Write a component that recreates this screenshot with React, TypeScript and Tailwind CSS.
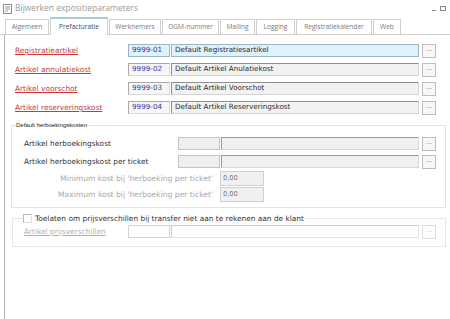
import React from 'react';

const tabs = [
  { name: 'Algemeen', w: 'w-[44px]' },
  { name: 'Prefacturatie', w: 'w-[58px]', active: true },
  { name: 'Werknemers', w: 'w-[52px]' },
  { name: 'OGM-nummer', w: 'w-[57px]' },
  { name: 'Mailing', w: 'w-[35px]' },
  { name: 'Logging', w: 'w-[39px]' },
  { name: 'Registratiekalender', w: 'w-[76px]' },
  { name: 'Web', w: 'w-[28px]' },
];

const articles = [
  { label: 'Registratieartikel', code: '9999-01', desc: 'Default Registratiesartikel', focus: true },
  { label: 'Artikel annulatiekost', code: '9999-02', desc: 'Default Artikel Anulatiekost' },
  { label: 'Artikel voorschot', code: '9999-03', desc: 'Default Artikel Voorschot' },
  { label: 'Artikel reserveringskost', code: '9999-04', desc: 'Default Artikel Reserveringskost' },
];

const DotsButton: React.FC<{ disabled?: boolean }> = ({ disabled }) => (
  <div
    className={`ml-[3px] w-[14px] h-[14px] flex items-center justify-center border text-[7px] leading-none pb-[2px] ${
      disabled ? 'border-[#dcdcdc] bg-white text-[#c8c8c8]' : 'border-[#bdbdbd] bg-[#f7f7f7] text-[#808080]'
    }`}
  >
    ...
  </div>
);

export default function App() {
  return (
    <div className="w-[450px] h-[319px] bg-white overflow-hidden flex flex-col font-['DejaVu_Sans',sans-serif]">
      {/* title bar */}
      <div className="h-[17px] flex items-center pl-[3px] pr-[4px] shrink-0">
        <svg width="9" height="10" viewBox="0 0 9 10" className="shrink-0">
          <rect x="0.5" y="0.5" width="8" height="9" fill="#fff" stroke="#8a8a8a" />
          <line x1="2" y1="3" x2="7" y2="3" stroke="#9a9a9a" />
          <line x1="2" y1="5" x2="7" y2="5" stroke="#9a9a9a" />
          <line x1="2" y1="7" x2="5" y2="7" stroke="#9a9a9a" />
        </svg>
        <span className="ml-[3px] text-[8.5px] text-[#9a9a9a] font-['Open_Sans',sans-serif]">
          Bijwerken expositieparameters
        </span>
        <div className="ml-auto flex items-center gap-[4px] text-[#8a8a8a]">
          <div className="w-[4px] h-[1px] bg-[#8a8a8a] mt-[4px]" />
          <div className="w-[6px] h-[5px] border border-[#8a8a8a]" />
        </div>
      </div>

      {/* tabs */}
      <div className="h-[18px] shrink-0 flex items-end pl-[5px] border-b border-[#cfcfcf] font-['Open_Sans',sans-serif]">
        {tabs.map((t) =>
          t.active ? (
            <div
              key={t.name}
              className={`${t.w} h-[18px] -mb-[1px] mr-[1px] bg-white border-x border-[#cfcfcf] border-t-2 border-t-[#a9cbe4] flex items-center justify-center text-[6.6px] text-[#3a4a66]`}
            >
              {t.name}
            </div>
          ) : (
            <div
              key={t.name}
              className={`${t.w} h-[15px] mr-[1px] bg-white border-x border-t border-[#cfcfcf] flex items-center justify-center text-[6.6px] text-[#7a7a7a]`}
            >
              {t.name}
            </div>
          )
        )}
      </div>

      {/* body */}
      <div className="flex-1 ml-[4px] border-l border-[#b4b4b4] flex flex-col">
        <div className="pt-[9px] pl-[10px] flex flex-col gap-[6px]">
          {articles.map((a) => (
            <div key={a.code} className="h-[13px] flex items-center">
              <span className="w-[113px] text-[7.4px] text-[#c83a3a] underline">{a.label}</span>
              <div
                className={`w-[42px] h-[13px] flex items-center pl-[3px] text-[7.2px] text-[#3535a0] border ${
                  a.focus ? 'bg-[#dff1fb] border-[#9ab5c8]' : 'bg-[#f6f6f6] border-[#a9a9a9] border-b-[#dadada] border-r-[#dadada]'
                }`}
              >
                {a.code}
              </div>
              <div
                className={`ml-[1px] w-[248px] h-[13px] flex items-center pl-[3px] text-[7.2px] text-[#2a2a2a] border ${
                  a.focus ? 'bg-[#dff1fb] border-[#9ab5c8]' : 'bg-[#f2f2f2] border-[#8f8f8f] border-b-[#d4d4d4] border-r-[#d4d4d4]'
                }`}
              >
                {a.desc}
              </div>
              <DotsButton />
            </div>
          ))}
        </div>

        {/* Default herboekingskosten */}
        <fieldset className="mt-[7px] ml-[6px] w-[435px] border border-[#e3e3e3] p-0 m-0">
          <legend className="ml-[4px] px-0 text-[6px] leading-[8px] text-[#222] font-['Liberation_Sans',sans-serif]">
            Default herboekingskosten
          </legend>
          <div className="pl-[12px] pt-[8px] pb-[5px] flex flex-col">
            {['Artikel herboekingskost', 'Artikel herboekingskost per ticket'].map((l, i) => (
              <div key={l} className={`h-[13px] flex items-center ${i ? 'mt-[5px]' : ''}`}>
                <span className="w-[154px] text-[7.4px] text-[#333]">{l}</span>
                <div className="w-[42px] h-[13px] bg-[#efefef] border border-[#c4c4c4]" />
                <div className="ml-[1px] w-[198px] h-[13px] bg-[#f0f0f0] border border-[#9a9a9a] border-b-[#d8d8d8] border-r-[#d8d8d8]" />
                <DotsButton />
              </div>
            ))}
            {["Minimum kost bij 'herboeking per ticket'", "Maximum kost bij 'herboeking per ticket'"].map((l, i) => (
              <div key={l} className={`h-[15px] flex items-center ${i ? 'mt-[1px]' : 'mt-[3px]'}`}>
                <span className="w-[196px] pr-[7px] text-right text-[7.6px] text-[#a8a8a8]">{l}</span>
                <div className="w-[44px] h-[15px] flex items-center pl-[2px] bg-[#f0f0f0] border border-[#d0d0d0] text-[6.6px] text-[#777]">
                  0,00
                </div>
              </div>
            ))}
          </div>
        </fieldset>

        {/* prijsverschillen */}
        <fieldset className="mt-[6px] ml-[7px] w-[434px] border border-[#e6e6e6] p-0 m-0">
          <legend className="ml-[10px] px-0 flex items-center leading-[9px]">
            <span className="w-[9px] h-[9px] bg-white border border-[#b8b8b8] border-b-[#e0e0e0] border-r-[#e0e0e0]" />
            <span className="ml-[3px] text-[7.4px] text-[#333]">
              Toelaten om prijsverschillen bij transfer niet aan te rekenen aan de klant
            </span>
          </legend>
          <div className="pl-[11px] pt-[2px] pb-[8px]">
            <div className="h-[13px] flex items-center">
              <span className="w-[104px] text-[7.4px] text-[#b0b0b0] underline">Artikel prijsverschillen</span>
              <div className="w-[42px] h-[13px] bg-white border border-[#d2d2d2]" />
              <div className="ml-[1px] w-[248px] h-[13px] bg-white border border-[#c8c8c8] border-b-[#e2e2e2] border-r-[#e2e2e2]" />
              <DotsButton disabled />
            </div>
          </div>
        </fieldset>
      </div>
    </div>
  );
}
